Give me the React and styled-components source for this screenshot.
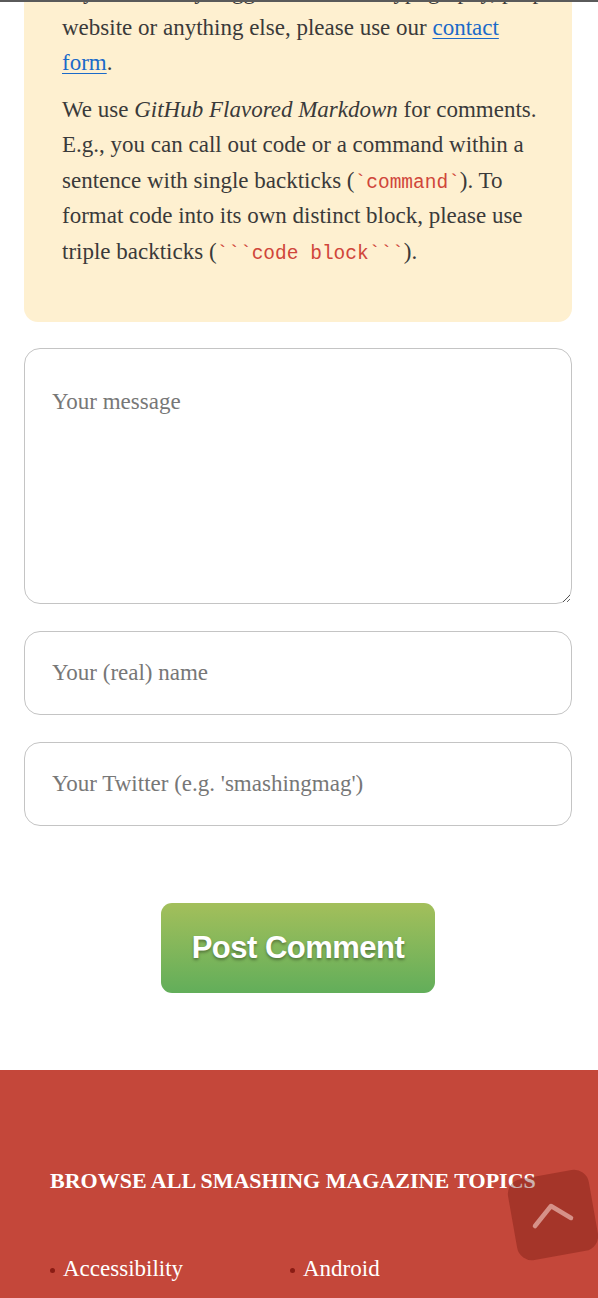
import React from 'react'
import styled, { createGlobalStyle } from 'styled-components'

const GlobalStyle = createGlobalStyle`
  html, body {
    margin: 0;
    padding: 0;
    background: #fff;
  }
  body {
    font-family: "Liberation Serif", serif;
    color: #333;
  }
`

const Page = styled.div`
  width: 598px;
  overflow: hidden;
  border-top: 2px solid #5a5a5a;
`

const Content = styled.div`
  padding: 0 26px 0 24px;
`

const Notice = styled.div`
  background: #fef0d0;
  border-radius: 0 0 14px 14px;
  padding: 0 30px 42px 38px;
  overflow: hidden;
`

const ClippedLine = styled.div`
  margin-top: -28px;
  font-size: 23px;
  line-height: 35.5px;
  white-space: nowrap;
  color: #3a3a3a;
`

const Para = styled.p`
  margin: 0 0 11px;
  font-size: 23px;
  line-height: 35.5px;
  white-space: nowrap;
  color: #3a3a3a;
`

const A = styled.a`
  color: #1b6ac9;
  text-decoration: underline;
  text-underline-offset: 3px;
  text-decoration-thickness: 1px;
`

const Code = styled.code`
  font-family: "Liberation Mono", monospace;
  font-size: 19.5px;
  line-height: 0;
  color: #d0463a;
`

const Form = styled.form`
  display: flex;
  flex-direction: column;
  gap: 27px;
  margin-top: 26px;
`

const Field = styled.input`
  box-sizing: border-box;
  width: 100%;
  height: 84px;
  border: 1.5px solid #c4c4c4;
  border-radius: 16px;
  padding: 0 27px;
  font-family: "Liberation Serif", serif;
  font-size: 23px;
  color: #333;
  outline: none;
  &::placeholder {
    color: #777;
  }
`

const Message = styled.textarea`
  box-sizing: border-box;
  display: block;
  width: 100%;
  height: 256px;
  border: 1.5px solid #c4c4c4;
  border-radius: 16px;
  padding: 37px 27px;
  font-family: "Liberation Serif", serif;
  font-size: 23px;
  line-height: 32px;
  color: #333;
  outline: none;
  resize: vertical;
  &::placeholder {
    color: #777;
  }
`

const Actions = styled.div`
  display: flex;
  justify-content: center;
  margin-top: 77px;
  margin-bottom: 77px;
`

const Submit = styled.button`
  width: 274px;
  height: 90px;
  border: none;
  border-radius: 11px;
  background: linear-gradient(to bottom, #a3bf5b 0%, #62ae5a 100%);
  color: #fff;
  font-family: "Liberation Sans", Arial, sans-serif;
  font-weight: bold;
  font-size: 31px;
  letter-spacing: -0.5px;
  text-shadow: 0 2px 3px rgba(0, 0, 0, 0.35);
  cursor: pointer;
`

const Footer = styled.footer`
  position: relative;
  background: #c4473a;
  padding: 98px 50px 40px;
  min-height: 300px;
`

const FooterTitle = styled.h3`
  margin: 0;
  color: #fff;
  font-family: "Liberation Serif", serif;
  font-weight: bold;
  font-size: 22px;
  text-transform: uppercase;
`

const Topics = styled.ul`
  list-style: none;
  margin: 62px 0 0;
  padding: 0;
  display: grid;
  grid-template-columns: 240px 240px;
  row-gap: 14px;
`

const Topic = styled.li`
  display: flex;
  align-items: center;
  gap: 8px;
  color: #fff;
  font-size: 23px;
  &::before {
    content: '';
    width: 5px;
    height: 5px;
    border-radius: 50%;
    background: #8a1c14;
    margin-top: 2px;
  }
`

const BackToTop = styled.a`
  position: absolute;
  top: 104px;
  right: 4px;
  width: 82px;
  height: 82px;
  border-radius: 15px;
  background: rgba(100, 15, 5, 0.32);
  transform: rotate(-10deg);
  display: flex;
  align-items: center;
  justify-content: center;
`

export default function App() {
  return (
    <Page>
      <GlobalStyle />
      <Content>
        <Notice>
          <ClippedLine>If you have any suggestions on the typography, purpose of the</ClippedLine>
          <Para>
            website or anything else, please use our <A href="#">contact<br />form</A>.
          </Para>
          <Para>
            We use <em>GitHub Flavored Markdown</em> for comments.<br />
            E.g., you can call out code or a command within a<br />
            sentence with single backticks (<Code>`command`</Code>). To<br />
            format code into its own distinct block, please use<br />
            triple backticks (<Code>```code block```</Code>).
          </Para>
        </Notice>
        <Form onSubmit={e => e.preventDefault()}>
          <Message placeholder="Your message" />
          <Field placeholder="Your (real) name" />
          <Field placeholder="Your Twitter (e.g. 'smashingmag')" />
        </Form>
        <Actions>
          <Submit type="submit">Post Comment</Submit>
        </Actions>
      </Content>
      <Footer>
        <FooterTitle>Browse All Smashing Magazine Topics</FooterTitle>
        <Topics>
          <Topic>Accessibility</Topic>
          <Topic>Android</Topic>
        </Topics>
        <BackToTop href="#" aria-label="Back to top">
          <svg width="48" height="30" viewBox="0 0 48 30">
            <path
              d="M6 26 L22 6 L42 18"
              fill="none"
              stroke="rgba(255,220,215,0.55)"
              strokeWidth="4.5"
              strokeLinecap="round"
              strokeLinejoin="round"
              transform="rotate(10 24 15)"
            />
          </svg>
        </BackToTop>
      </Footer>
    </Page>
  )
}
